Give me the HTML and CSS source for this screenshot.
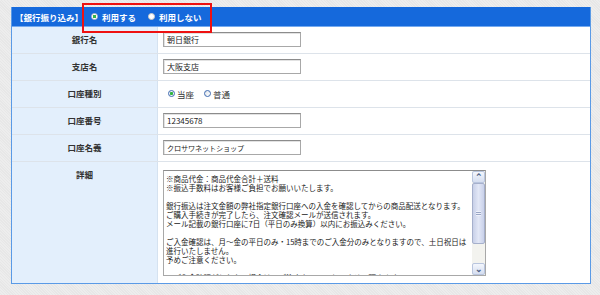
FILE: index.html
```html
<!DOCTYPE html>
<html lang="ja">
<head>
<meta charset="UTF-8">
<title>銀行振り込み設定</title>
<link rel="stylesheet" href="styles.css">
</head>
<body>
    <div class="page">
        <div class="panel">
            <div class="panel-head">
                <span class="head-title">【銀行振り込み】</span>
                <span class="head-opt"><span class="dot dot-on"></span>利用する</span>
                <span class="head-opt"><span class="dot"></span>利用しない</span>
            </div>

            <div class="row">
                <div class="row-label">銀行名</div>
                <div class="row-value"><input class="field" type="text" value="朝日銀行" readonly></div>
            </div>
            <div class="row">
                <div class="row-label">支店名</div>
                <div class="row-value"><input class="field" type="text" value="大阪支店" readonly></div>
            </div>
            <div class="row">
                <div class="row-label">口座種別</div>
                <div class="row-value">
                    <span class="opt"><span class="rb rb-on"></span>当座</span>
                    <span class="opt"><span class="rb"></span>普通</span>
                </div>
            </div>
            <div class="row">
                <div class="row-label">口座番号</div>
                <div class="row-value"><input class="field" type="text" value="12345678" readonly></div>
            </div>
            <div class="row">
                <div class="row-label">口座名義</div>
                <div class="row-value"><input class="field field-kana" type="text" value="クロサワネットショップ" readonly></div>
            </div>
            <div class="row row-last">
                <div class="row-label">詳細</div>
                <div class="row-value">
                    <div class="memo">
                        <div class="memo-text">※商品代金：商品代金合計＋送料
※振込手数料はお客様ご負担でお願いいたします。

銀行振込は注文金額の弊社指定銀行口座への入金を確認してからの商品配送となります。
ご購入手続きが完了したら、注文確認メールが送信されます。
メール記載の銀行口座に7日（平日のみ換算）以内にお振込みください。

ご入金確認は、月～金の平日のみ・15時までのご入金分のみとなりますので、土日祝日は
進行いたしません。
予めご注意ください。

※ご入金確認がとれない場合は、ご注文をキャンセルさせて頂きます。</div>
                        <div class="sbar">
                            <div class="sbar-btn">&#8963;</div>
                            <div class="sbar-track">
                                <div class="sbar-thumb"><span class="grip"></span></div>
                            </div>
                            <div class="sbar-btn">&#8964;</div>
                        </div>
                    </div>
                </div>
            </div>
        </div>

        <div class="mark"></div>
    </div>
</body>
</html>
```

FILE: styles.css
```css
html, body {
    margin: 0;
    padding: 0;
    height: 100%;
    overflow: hidden;
}

body {
    font-family: "Noto Sans CJK JP", "Noto Sans", sans-serif;
    color: #333;
    background: repeating-linear-gradient(45deg, #ededed 0, #ededed 1px, #e7e7e7 1px, #e7e7e7 2px);
}

.page {
    position: relative;
    padding: 7px 0 0 11px;
}

.panel {
    width: 578px;
    border: 1px solid #5a9ae6;
    border-top: 0;
    background: #fff;
}

.panel-head {
    display: flex;
    align-items: center;
    height: 19px;
    padding-left: 3px;
    background: #1569dc;
    border-bottom: 1px solid #74aaf0;
    color: #fff;
    font-size: 8.5px;
    font-weight: bold;
}

.head-title {
    margin-right: 8px;
}

.head-opt {
    display: flex;
    align-items: center;
    margin-right: 12px;
}

.dot {
    width: 5px;
    height: 5px;
    margin-right: 4px;
    border: 1px solid #c9c9c9;
    border-radius: 50%;
    background: #fff;
}

.dot-on {
    background: radial-gradient(circle, #36b64a 0, #36b64a 1.5px, #fff 2px);
}

.row {
    display: flex;
    border-bottom: 1px solid #dde3ea;
}

.row:first-of-type .row-value {
    padding-top: 6px;
}

.row-last {
    border-bottom: 0;
}

.row-label {
    width: 145px;
    flex: none;
    padding-top: 7px;
    background: #e3effc;
    border-right: 1px solid #d5e2f0;
    text-align: center;
    font-size: 8.5px;
    font-weight: bold;
    line-height: 10px;
}

.row-value {
    flex: 1;
    display: flex;
    align-items: center;
    min-height: 15px;
    padding: 5px 5px 6px;
    font-size: 8.5px;
}

.field {
    box-sizing: border-box;
    width: 138px;
    height: 15px;
    margin: 0;
    padding: 0 3px;
    border: 1px solid #a8a8a8;
    border-top-color: #8c8c8c;
    box-shadow: inset 1px 1px 0 #e2e2e2;
    font-family: "Noto Sans CJK JP", sans-serif;
    font-size: 8px;
    color: #222;
    outline: none;
}

.field-kana {
    font-size: 7.2px;
    letter-spacing: -0.2px;
}

.opt {
    display: flex;
    align-items: center;
    margin: 0 10px 0 5px;
    color: #333;
}

.opt + .opt {
    margin-left: 0;
}

.rb {
    width: 5px;
    height: 5px;
    margin-right: 2px;
    border: 1px solid #3f6ab0;
    border-radius: 50%;
    background: linear-gradient(135deg, #dfe4ea, #fff);
}

.rb-on {
    background: radial-gradient(circle, #2fb53e 0, #2fb53e 1.3px, #eef1f4 1.9px);
}

.row-last .row-value {
    align-items: flex-start;
    padding: 8px 5px 7px;
}

.memo {
    display: flex;
    box-sizing: border-box;
    width: 323px;
    height: 106px;
    border: 1px solid #a8a8a8;
    border-top-color: #8c8c8c;
    background: #fff;
}

.memo-text {
    flex: 1;
    overflow: hidden;
    padding: 3px 2px;
    white-space: pre;
    font-size: 7.5px;
    line-height: 9px;
    color: #222;
}

.sbar {
    display: flex;
    flex-direction: column;
    width: 13px;
    flex: none;
    background: #f3f3ef;
}

.sbar-btn {
    height: 12px;
    box-sizing: border-box;
    border: 1px solid #b9c5de;
    border-radius: 2px;
    background: linear-gradient(#f4f7fd, #d5def0);
    color: #4d6185;
    font-size: 9px;
    font-weight: bold;
    line-height: 10px;
    text-align: center;
}

.sbar-track {
    flex: 1;
}

.sbar-thumb {
    display: flex;
    align-items: center;
    justify-content: center;
    box-sizing: border-box;
    height: 61px;
    border: 1px solid #a6b0cc;
    border-radius: 2px;
    background: linear-gradient(90deg, #c8d0e8, #e2e7f6 50%, #c9d1ea);
}

.grip {
    width: 5px;
    height: 5px;
    background: repeating-linear-gradient(#eef1fa 0, #eef1fa 1px, #9aa6c6 1px, #9aa6c6 2px);
}

.mark {
    position: absolute;
    left: 82px;
    top: 3px;
    width: 126px;
    height: 26px;
    border: 2px solid #ee1111;
}
```
